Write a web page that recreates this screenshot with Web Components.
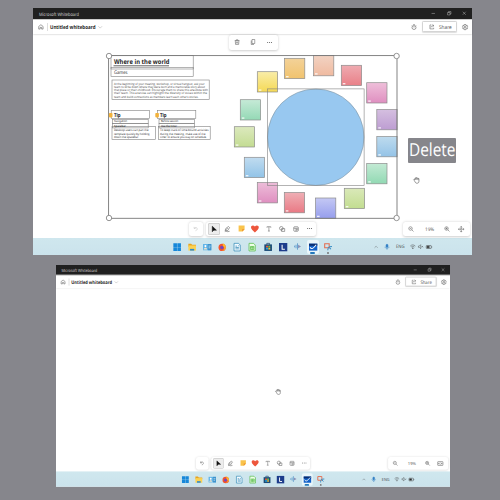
<!DOCTYPE html>
<html lang="en"><head><meta charset="utf-8"><title>Microsoft Whiteboard</title>
<style>
html,body{margin:0;width:500px;height:500px;overflow:hidden;background:#86868c;font-family:"Open Sans","Noto Sans",sans-serif}
.stage{display:flex;flex-direction:column;align-items:flex-start;gap:10px;padding:8px 0 0 33px;box-sizing:border-box;height:500px}
.small{margin-left:23px;transform:scale(.8975);transform-origin:0 0}
</style></head><body>
<div class="stage">
<whiteboard-window>
  <template-board></template-board>
  <canvas-cursor x="383.5" y="172.5"></canvas-cursor>
  <key-caption></key-caption>
</whiteboard-window>
<whiteboard-window class="small" cleared>
  <canvas-cursor x="247.4" y="141.5"></canvas-cursor>
</whiteboard-window>
</div>
<script>
const ICONS={
home:'<path d="M3 10 12 3l9 7v11h-6v-7H9v7H3z"/>',
chev:'<path d="m2 7 10 10L22 7"/>',
up:'<path d="m3 16 9-9 9 9"/>',
min:'<path d="M3 13h18"/>',
restore:'<path d="M3 8h13v13H3zM8 8V3h13v13h-5"/>',
close:'<path d="m4 4 16 16M20 4 4 20"/>',
timer:'<circle cx="12" cy="14" r="8"/><path d="M9 2h6M12 9v5M19 5l2 2M3 7l2-2"/>',
share:'<path d="M10 4H4v17h16v-5M8 15c1-6 5-8 12-8M15 2l6 5-6 5"/>',
gear:'<path d="m9 2-1 4-4-1-2 4 3 3-3 3 2 4 4-1 1 4h6l1-4 4 1 2-4-3-3 3-3-2-4-4 1-1-4z"/><circle cx="12" cy="12" r="3.5"/>',
trash:'<path d="M3 6h18M9 6V3h6v3M5 6l1 15h12l1-15M10 10v7M14 10v7"/>',
copy:'<path d="M8 2h11v16H8zM5 6v16h11"/>',
dots:'<g fill="currentColor" stroke="none"><circle cx="3" cy="12" r="2.4"/><circle cx="12" cy="12" r="2.4"/><circle cx="21" cy="12" r="2.4"/></g>',
undo:'<path d="M5 4v7h7M5 11c4-7 14-6 14 2 0 4-4 7-8 8"/>',
arrow:'<path fill="#111" stroke="#111" d="M5 1v21l6-6h10z"/>',
pen:'<path d="m4 17 3-8L17 2l4 4-7 11zM8 14l6-6M3 21c6-4 6 3 18-1"/>',
note:'<path fill="#f9c34c" stroke="none" d="M2 2h20v13l-7 7H2z"/><path fill="#ee8c2d" stroke="none" d="M14 22v-8h8z"/>',
heart:'<path fill="#ed563c" stroke="none" d="M12 23C5 17 0 13 0 7c0-6 8-8 12-2 4-6 12-4 12 2 0 6-5 10-12 16z"/>',
text:'<path d="M4 7V3h16v4M12 3v18M8 21h8"/>',
shapes:'<circle cx="9" cy="9" r="7"/><path d="M10 10h12v11H10z"/>',
tmpl:'<rect x="3" y="3" width="18" height="18" rx="3"/><path d="M3 9h18M12 9v12M12 15h9"/>',
zout:'<circle cx="10" cy="10" r="7"/><path d="m15 15 7 7M7 10h6"/>',
zin:'<circle cx="10" cy="10" r="7"/><path d="m15 15 7 7M6 10h8M10 6v8"/>',
fit:'<path d="M9 5l3-4 3 4M9 19l3 4 3-4M5 9l-4 3 4 3M19 9l4 3-4 3M12 3v5M12 16v5M3 12h5M16 12h5"/><circle cx="12" cy="12" r="3"/>',
fit2:'<rect x="1" y="4" width="22" height="16" rx="2"/><path d="M6 9v6M18 9v6M4 12h4M16 12h4M12 8v3M12 14v3"/>',
win:'<path fill="#1687d9" stroke="none" d="M1 1h10.5v10.5H1zM12.5 1H23v10.5H12.5zM1 12.5h10.5V23H1zM12.5 12.5H23V23H12.5z"/>',
folder:'<path fill="#e7a31e" stroke="none" d="M1 2h8l3 3h11v6H1z"/><path fill="#fbd153" stroke="none" d="M1 7h22v15H1z"/><path fill="#2989cf" stroke="none" d="M6 17h12v5H6z"/>',
card:'<path fill="#5fb4e8" stroke="none" d="M0 3h24v18H0z"/><path fill="#3f93cc" stroke="none" d="M14 3h10v18H14z"/><path stroke="#d6edf8" d="M16 9h6M16 14h5"/><circle cx="7" cy="9" r="3" fill="#fff" stroke="none"/><path fill="#f0e2c9" stroke="none" d="M2 19c0-7 10-7 10 0z"/>',
fox:'<circle cx="12" cy="13" r="10.5" fill="#f5532d" stroke="none"/><path fill="#ffb52b" stroke="none" d="M14 1c6 2 10 9 8 14-2 5-6 8-10 8 7-4 9-9 2-14z"/><circle cx="11" cy="13" r="5" fill="#7546bc" stroke="none"/>',
docb:'<path fill="#f4fbff" stroke="#2e86b3" d="M3 1h13l5 5v17H3z"/><path stroke="#2e86b3" d="M7 9h5M7 13h10M7 17h10M15 8h3"/>',
docg:'<path fill="#efffe9" stroke="#4fb841" d="M3 1h13l5 5v17H3z"/><path stroke="#4fb841" d="M7 10h10v9H7zM7 14h10M12 10v9"/>',
store:'<path stroke="#173f67" d="M8 5V1h8v4"/><path fill="#1b4b78" stroke="none" d="M1 4h22v19H1z"/><path fill="#f25d36" stroke="none" d="M6 8h5.5v5H6z"/><path fill="#7cc242" stroke="none" d="M12.5 8H18v5h-5.5z"/><path fill="#22a9e8" stroke="none" d="M6 14h5.5v5H6z"/><path fill="#fbc02c" stroke="none" d="M12.5 14H18v5h-5.5z"/>',
ell:'<path fill="#1d3c8b" stroke="none" d="M0 0h24v24H0z"/><path stroke="#fff" stroke-width="3" d="M9 5v13h8"/>',
wave:'<path stroke="#5d99cb" stroke-width="3" d="M2 9v6M7 6v12M12 1v22"/><path fill="#8a91b7" stroke="none" d="M14 6l10 6-10 6z"/>',
board:'<path fill="#1261c9" stroke="none" d="M0 2h24v20H0z"/><path fill="#0a2d70" stroke="none" d="M0 2h24v6H0z"/><path stroke="#fff" stroke-width="3" d="M3 12c5 9 10 2 18-7"/>',
snip:'<path stroke="#e46b4e" stroke-width="3" d="M2 2h13v12H2z"/><path stroke="#338bc4" stroke-width="3" d="M23 10c-11 0-12 4-12 11M14 11l6 7"/>',
mic:'<rect x="8" y="1" width="8" height="13" rx="4" fill="#3380c5" stroke="#3380c5"/><path stroke="#3380c5" d="M4 11c0 9 16 9 16 0M12 18v5"/>',
wifi:'<path d="M1 9c7-7 15-7 22 0M5 13c5-4 9-4 14 0M9 17c2-2 4-2 6 0l-3 4z"/>',
vol:'<path d="M2 9h4l6-6v18l-6-6H2zM16 9l6 6M22 9l-6 6"/>',
bat:'<rect x="1" y="6" width="20" height="12" rx="2"/><path fill="#222" d="M4 9h9v6H4zM23 10v4"/>',
hand:'<path fill="#fff" d="M5 13 2 10c1-3 4-1 5 0V5c0-3 3-3 3 0 0-4 4-4 4 0 0-3 4-2 4 1 0-2 3-2 3 1v8c0 5-3 7-7 7-5 0-6-3-9-9z"/><path d="M10 5v5M14 5v5M18 6v5"/>'
};
function define(name,render){customElements.define(name,class extends HTMLElement{connectedCallback(){
  if(this.shadowRoot)return;this.attachShadow({mode:'open'}).innerHTML=render(this);}});}
const ic=(n,s=7,c='')=>`<wb-icon name="${n}" size="${s}"${c?` style="color:${c}"`:''}></wb-icon>`;
const ft=(t,w,s,extra='')=>`<fit-text w="${w}" size="${s}" ${extra}>${t}</fit-text>`;

define('wb-icon',e=>{const s=e.getAttribute('size');return `<style>:host{display:block;flex:none;width:${s}px;height:${s}px}svg{display:block;overflow:visible}</style>
<svg width="${s}" height="${s}" viewBox="0 0 24 24" fill="none" stroke="currentColor" stroke-width="2.1">${ICONS[e.getAttribute('name')]}</svg>`});

define('fit-text',e=>{const s=+e.getAttribute('size'),w=e.getAttribute('w'),b=e.getAttribute('weight')||400;
return `<style>:host{display:block;flex:none;width:${w}px;height:${s*1.2}px}svg{display:block;overflow:visible}text{font-size:${s}px;font-weight:${b};fill:currentColor;text-rendering:geometricPrecision}</style>
<svg width="${w}" height="${s*1.2}"><text x="0" y="${s*.96}" textLength="${w}" lengthAdjust="spacingAndGlyphs">${e.textContent}</text></svg>`});

define('title-bar',()=>`<style>:host{display:flex;align-items:center;height:11px;box-sizing:border-box;padding:0 5.5px 0 5.5px;background:#202020;color:#dedede}.sp{flex:1}.b{display:flex;gap:10.8px}</style>
${ft('Microsoft Whiteboard',40,4.7)}<span class="sp"></span><div class="b">${ic('min',4.5)}${ic('restore',4.5)}${ic('close',4.5)}</div>`);

define('board-header',()=>`<style>:host{display:flex;align-items:center;height:14.5px;box-sizing:border-box;padding:0 4px 0 4.5px;background:#fff;color:#4a4a4a;box-shadow:0 .7px 1.6px #0003;position:relative;border-top:.6px solid #ccc}
.sp{flex:1}.div{width:.5px;height:8px;background:#ddd;margin:0 2.5px 0 3.5px}.t{color:#1c1c1c;margin-right:2.8px}
.share{display:flex;align-items:center;gap:4px;box-sizing:border-box;width:34.5px;height:11.2px;padding-left:6px;border:.6px solid #d4d4d4;border-radius:1.5px;margin:0 5px 0 5px;background:#fff;box-shadow:0 .4px 1px #0002}</style>
${ic('home',5.8)}<span class="div"></span><div class="t">${ft('Untitled whiteboard',45.5,5.3,'weight="700"')}</div>${ic('chev',4.4,'#888')}<span class="sp"></span>${ic('timer',6)}<div class="share">${ic('share',5.6)}${ft('Share',12.8,5.3)}</div>${ic('gear',6.2)}`);

define('tool-panel',()=>`<style>:host{display:flex;align-items:center;box-sizing:border-box;height:14.6px;background:#fff;border-radius:2.5px;box-shadow:0 .4px 2.6px #0003;color:#555}</style><slot></slot>`);

define('tool-cell',e=>`<style>:host{display:flex;align-items:center;justify-content:center;flex:none;width:${e.getAttribute('w')}px;height:11.4px;box-sizing:border-box}div{display:flex;align-items:center;justify-content:center;width:11.4px;height:11.4px;box-sizing:border-box;border-radius:2px;${e.hasAttribute('on')?'background:#ededed;box-shadow:inset 0 0 0 .5px #bbb':''}}</style><div><slot></slot></div>`);
const cell=(c,w=13.65,on='')=>`<tool-cell w="${w}" ${on}>${c}</tool-cell>`;

define('task-bar',()=>`<style>:host{display:grid;grid-template-columns:1fr;height:16.6px;background:linear-gradient(#cfe7ee,#cbe3ec);color:#444}
.apps,.tray{grid-area:1/1;display:flex;align-items:center}.apps{padding-left:136.8px}.app{width:15.07px;flex:none;height:14px;display:flex;flex-direction:column;align-items:center;justify-content:center;border-radius:2px;position:relative}
.on{background:#eaf6fa;width:12px;margin:0 1.53px}.on::after,.last::after{content:"";position:absolute;bottom:.2px;width:5px;height:1.2px;background:#2479bd;border-radius:1px}.last::after{width:1.6px;background:#777}
.tray{padding-left:341px}</style>
<div class="apps">${['win','folder','card','fox','docb','docg','store','ell','wave','board','snip'].map((n,i)=>`<div class="app ${i==9?'on':i==10?'last':''}">${ic(n,i==8?7:8.3)}</div>`).join('')}</div>
<div class="tray">${ic('up',4.2)}<span style="width:6.3px"></span>${ic('mic',6)}<span style="width:5.2px"></span>${ft('ENG',8.6,4.6)}<span style="width:6px"></span>${ic('wifi',5.6)}<span style="width:2.3px"></span>${ic('vol',5.4)}<span style="width:2.6px"></span>${ic('bat',6)}</div>`);

define('canvas-cursor',e=>`<style>:host{position:absolute;left:${e.getAttribute('x')-3.3}px;top:${e.getAttribute('y')-3.5}px;color:#555}</style>${ic('hand',6.8)}`);

define('key-caption',()=>`<style>:host{position:absolute;left:374.5px;top:130.3px;width:48.5px;height:24.3px;box-sizing:border-box;display:flex;align-items:center;justify-content:center;padding-bottom:2px;background:#86868b;color:#fff;border-radius:1px}</style>${ft('Delete',46.5,18)}`);

const at=(x,y,w,t,s,wt='')=>`<div class="p" style="left:${x}px;top:${(y-s*.96).toFixed(2)}px">${ft(t,w,s,wt)}</div>`;
const box=(x,y,x2,y2)=>`<rect x="${x}" y="${y}" width="${x2-x}" height="${y2-y}"/>`;
define('template-board',()=>{
const notes=[[257.3,71.7,'#f9eda9','#f5d955'],[284.5,58.3,'#f3d299','#f1c36e'],[313.5,55.5,'#f2d3c3','#f0baa0'],[341.3,65.3,'#efabb1','#e98088'],[366.7,82.7,'#efbfda','#df8fc0'],[376.8,109.5,'#d5bfe0','#bd9dd2'],[376.8,136.5,'#bedbee','#94c3e7'],[366.7,163.5,'#c3ead4','#91d9b3'],[344.3,188.3,'#dae9b9','#c2dd90'],[315.5,198,'#c4c8f4','#969eed'],[284.3,192.5,'#efafb5','#e97984'],[257.3,182.6,'#edbdd9','#df8fc0'],[244.3,157.3,'#c1dcf0','#91c3e7'],[234.3,126.7,'#dce9be','#c3dc92'],[240.3,99.7,'#c6ead7','#94d9b5']];
return `<style>:host{position:absolute;left:-33px;top:-8px;width:500px;height:256px;color:#222}svg.d{position:absolute;left:0;top:0}.p{position:absolute}.soft{color:#444}</style>
<svg class="d" width="500" height="256"><defs>${notes.map((n,i)=>`<linearGradient id="n${i}" x2="0" y2="1"><stop stop-color="${n[2]}"/><stop offset="1" stop-color="${n[3]}"/></linearGradient>`).join('')}</defs>
${notes.map((n,i)=>`<rect x="${n[0]}" y="${n[1]}" width="20.3" height="20.3" fill="url(#n${i})" stroke="#8c8c8c" stroke-width=".7"/><path d="M${n[0]+1.5} ${n[1]+18.4}h2.6" stroke="#fff" stroke-opacity=".8" stroke-width="1.4"/>`).join('')}
<circle cx="315.8" cy="137.2" r="48.2" fill="#98c8f0" stroke="#7f93a1" stroke-width=".6"/>
<g fill="none" stroke="#808080" stroke-width=".6">${box(267.4,88.9,364.1,185.5)}${box(111,55.6,193.2,69)}${box(111,67.5,193.2,76.6)}${box(112,80,209.2,99.4)}
${box(111.2,110.5,149.4,118.5)}${box(112.5,119.3,148.2,123.6)}${box(112.5,123.6,148.2,127.9)}${box(112,126.6,155.5,139.6)}
${box(157.6,110.5,195.8,118.5)}${box(159,119.3,194.6,123.6)}${box(159,123.6,194.6,127.9)}${box(158.6,126.6,210.2,139.6)}</g>
<rect x="108.6" y="55.6" width="288.4" height="162.7" fill="none" stroke="#777" stroke-width=".9"/>
<g fill="#fff" stroke="#888" stroke-width=".9"><circle cx="109" cy="56" r="2.7"/><circle cx="396.6" cy="56" r="2.7"/><circle cx="109" cy="218" r="2.7"/><circle cx="396.6" cy="218" r="2.7"/></g>
<path d="M113.5 65.8h55.5" stroke="#222" stroke-width=".7"/><g fill="#f2b23c"><rect x="108.9" y="113" width="3.6" height="4.4" rx=".8"/><rect x="155.3" y="113" width="3.6" height="4.4" rx=".8"/></g></svg>
${at(113.5,64.6,55.5,'Where in the world',6.5,'weight="700"')}${at(113.5,74,13.5,'Games',4.8)}
<div class="soft">${[['At the beginning of your meeting, workshop, or virtual hangout, ask your',90.5],['team to write down where they were born and a memorable story about',91],['that place or their childhood. Encourage them to share this anecdote with',94],['their team. This exercise can highlight the diversity of voices within the',93],['team and build connections as members learn each other’s stories.',84.5]].map((l,i)=>at(113.5,84.5+i*3.28,l[1],l[0],3.1)).join('')}</div>
${at(113.6,116.9,6.6,'Tip',5.3,'weight="700"')}${at(160,116.9,6.6,'Tip',5.3,'weight="700"')}
${at(114,122.2,13.2,'Navigation',2.9)}${at(114,126.8,12,'Spacebar',2.9,'weight="600"')}${at(160.8,122.2,17.2,'Before session',2.9)}${at(160.8,126.8,16,'Use the timer',2.9,'weight="600"')}
${at(113.8,131.1,34.5,'Desktop users can pan the',3)}${at(113.8,134.5,35.5,'template quickly by holding',3)}${at(113.8,137.9,25,'down the spacebar.',3)}
${at(160.4,131.1,48.5,'To keep track of time-bound activities',3)}${at(160.4,134.5,45.5,'during the meeting, make use of the',3)}${at(160.4,137.9,46.8,'timer to ensure you stay on schedule.',3)}`});

define('whiteboard-window',e=>{const c=e.hasAttribute('cleared');return `<style>:host{display:flex;flex-direction:column;position:relative;flex:none;width:439px;height:247px;background:#fff}
.space{flex:1}.over{position:absolute;top:213.6px}.undo{left:156px}.main{left:173.2px}.zoom{left:369.5px}.sel{left:196px;top:27px}</style>
<title-bar></title-bar><board-header></board-header><div class="space"></div><task-bar></task-bar><slot></slot>
${c?'':`<tool-panel class="over sel">${cell(ic('trash',6.2),16.3)}${cell(ic('copy',6),16)}${cell(ic('dots',5.2),16.3)}</tool-panel>`}
<tool-panel class="over undo">${cell(ic('undo',5.4,c?'#444':'#bbb'),14)}</tool-panel>
<tool-panel class="over main"><span style="width:1px"></span>${cell(ic('arrow',6.2),13.65,'on')}${cell(ic('pen',6.4))}${cell(ic('note',7.2))}${cell(ic('heart',7.8))}${cell(ic('text',5.8))}${cell(ic('shapes',6.2))}${cell(ic('tmpl',6))}${cell(ic('dots',5.2))}</tool-panel>
<tool-panel class="over zoom">${cell(ic('zout',6),17.5)}${cell(ft('19%',9.2,4.8),18.5)}${cell(ic('zin',6),18)}${cell(ic(c?'fit2':'fit',6.4),8.6)}<span style="width:4.5px"></span></tool-panel>`});
</script></body></html>
